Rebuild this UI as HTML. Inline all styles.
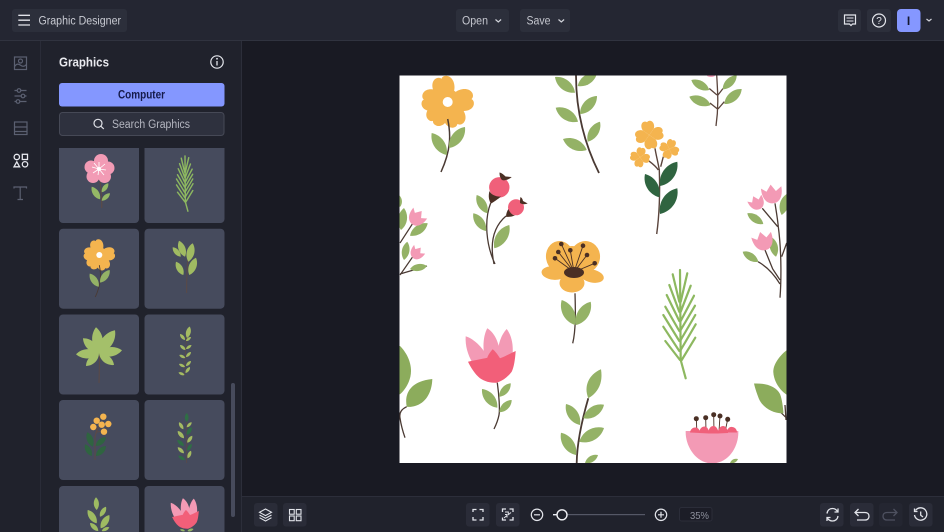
<!DOCTYPE html>
<html><head><meta charset="utf-8"><title>Graphic Designer</title>
<style>
html,body{margin:0;padding:0;background:#191a23;width:944px;height:532px;overflow:hidden}
svg{display:block;overflow:hidden}
text{font-family:"Liberation Sans",sans-serif}
</style></head><body>
<svg width="944" height="532" viewBox="0 0 944 532" xmlns="http://www.w3.org/2000/svg">
<defs>
<path id="l" d="M0 0C.28 -.27 .72 -.27 1 0C.72 .27 .28 .27 0 0Z"/>
<path id="p" d="M0 0L-9 -9C-12 -14 -12 -23 -6 -25.500C-3 -26.500 -1 -25.500 0 -24C1 -25.500 3 -26.500 6 -25.500C12 -23 12 -14 9 -9Z"/>
<path id="q" d="M0 0L-5.500 -5.500C-7.500 -9 -6 -14 -2.500 -14C-1.500 -14 -.5 -13.500 0 -13C.5 -13.500 1.500 -14 2.500 -14C6 -14 7.500 -9 5.500 -5.500Z"/>
<path id="t" d="M0 0C-6 0 -10.500 -5 -10.500 -15L-5.500 -11.500L-1 -18L3.500 -11.500L9 -15.500C10 -6 6 0 0 0Z"/>
<clipPath id="cv"><rect x="399.500" y="75.500" width="387" height="387.500"/></clipPath>
<clipPath id="list"><rect x="50" y="148" width="176" height="384"/></clipPath>

<g id="fl1">
<g fill="#f4b44f">
<circle cx="447.700" cy="102" r="13"/>
<use href="#p" transform="translate(447.700 102) rotate(-15)"/>
<use href="#p" transform="translate(447.700 102) rotate(83)"/>
<use href="#p" transform="translate(447.700 102) rotate(156)"/>
<use href="#p" transform="translate(447.700 102) rotate(218)"/>
<use href="#p" transform="translate(447.700 102) rotate(276)"/>
</g>
<circle cx="447.700" cy="102" r="5" fill="#fff"/>
<path d="M447.700 119C451 135 451 150 441 172" fill="none" stroke="#4a3a33" stroke-width="1.500"/>
<g fill="#94b266">
<use href="#l" transform="matrix(-15 -22 22 -15 446.700 155)"/>
<use href="#l" transform="matrix(16 -21 21 16 449 148)"/>
</g>
</g>

<g id="fern" fill="none" stroke-linecap="round">
<path d="M680 270L680.700 360L685.700 378.300"/>
<path d="M679.300 301.700L672.700 274.300M679.300 311.700L669.300 285M679.300 321L666.700 295M679.300 331L665.300 306.700M679.300 341L663.300 315M679.300 351L663.300 326.700M680 360L665.300 341"/>
<path d="M680.700 301.700L687.300 273.300M680.700 311.700L690.700 285.700M680.700 321L694 295.700M680.700 330L695 305.700M680.700 340L695.300 315M680.700 350L695.700 324.300M681.700 360L695.300 337.700"/>
</g>

<g id="tulh">
<g fill="#f39ab5">
<path d="M465.700 336.300C474 339 484 348 490 362L472 362C468 355 465 346 465.700 336.300Z"/>
<path d="M487.300 328.300C495 333 501 345 500 362L486 362C482 350 483 336 487.300 328.300Z"/>
<path d="M506.700 329C512 336 514 347 512 358L497 362C497 348 500 336 506.700 329Z"/>
</g>
<path d="M468 361.700C475 360 482 359 487.300 357.700C488 355 491 351 492.700 349.300C495 351 498 355 500 358.300C506 356 511 353 515.700 351C515 360 514 367 511.700 371.700C507 378 502 381 496.700 382.700C489 383 484 381 480 378.300C475 374 471 368 468 361.700Z" fill="#f25f79"/>
</g>
</defs>

<!-- base panels -->
<rect width="944" height="532" fill="#191a23"/>
<rect x="0" y="40" width="241" height="492" fill="#20222c"/>
<rect x="241" y="497" width="703" height="35" fill="#20222c"/>
<rect x="0" y="0" width="944" height="40" fill="#242632"/>
<rect x="0" y="40" width="944" height="1" fill="#30333f"/>
<rect x="40" y="41" width="1" height="491" fill="#2a2c38"/>
<rect x="241" y="41" width="1" height="491" fill="#2c2e3a"/>
<rect x="242" y="496" width="702" height="1" fill="#2c2e3a"/>

<!-- top bar -->
<rect x="12" y="9" width="115" height="23" rx="3" fill="#2c2f3b"/>
<path d="M18.300 15.300H30M18.300 20.200H30M18.300 25H30" stroke="#e2e4ea" stroke-width="1.300" fill="none"/>
<text x="38.500" y="24.500" font-size="11.500" fill="#c9cbd3" textLength="82.500" lengthAdjust="spacingAndGlyphs">Graphic Designer</text>

<rect x="456" y="9" width="53" height="23" rx="3" fill="#2c2f3b"/>
<text x="462" y="24.500" font-size="11.500" fill="#c4c6ce" textLength="26" lengthAdjust="spacingAndGlyphs">Open</text>
<path d="M495.500 19.500L498.300 22L501.100 19.500" fill="none" stroke="#d2d4db" stroke-width="1.200"/>
<rect x="520" y="9" width="50" height="23" rx="3" fill="#2c2f3b"/>
<text x="526.500" y="24.500" font-size="11.500" fill="#c4c6ce" textLength="24" lengthAdjust="spacingAndGlyphs">Save</text>
<path d="M558.500 19.500L561.300 22L564.100 19.500" fill="none" stroke="#d2d4db" stroke-width="1.200"/>

<rect x="838" y="9" width="23" height="23" rx="3" fill="#2c2f3b"/>
<path d="M844.500 15H855.500V24H852.500L851 25.500L849.500 24H844.500Z" fill="none" stroke="#e4e6ec" stroke-width="1.200"/>
<path d="M846.500 18H853.500M846.500 21H853.500" stroke="#e4e6ec" stroke-width="1"/>
<rect x="867" y="9" width="24" height="23" rx="3" fill="#2c2f3b"/>
<circle cx="879" cy="20.500" r="6.500" fill="none" stroke="#e4e6ec" stroke-width="1.200"/>
<text x="879" y="24" font-size="10" text-anchor="middle" fill="#e4e6ec">?</text>
<rect x="897" y="9" width="23.500" height="23" rx="4" fill="#8597ff"/>
<text x="908.500" y="25" font-size="12" text-anchor="middle" fill="#151830" font-weight="bold">I</text>
<path d="M926.500 19L929 21L931.500 19" fill="none" stroke="#d2d4db" stroke-width="1.200"/>

<!-- rail icons -->
<g fill="none" stroke="#5b6071" stroke-width="1.200">
<rect x="14.500" y="57" width="12" height="12.500"/>
<circle cx="20.500" cy="61" r="2"/>
<path d="M14.500 66.500C17 63 19 64 21 65.500C23 67 25 66 26.500 64.500"/>
<path d="M14.500 90.500H26.500M14.500 96H26.500M14.500 101.500H26.500"/>
<circle cx="19" cy="90.500" r="1.800" fill="#20222c"/><circle cx="23" cy="96" r="1.800" fill="#20222c"/><circle cx="18" cy="101.500" r="1.800" fill="#20222c"/>
<rect x="14.500" y="122" width="12.500" height="12.500"/>
<path d="M14.500 127H27M14.500 131.500H27"/>
<path d="M14 188.500V187H26.500V188.500M20.200 187V199.500M17.500 199.500H23"/>
</g>
<g fill="none" stroke="#e6e8ee" stroke-width="1.300">
<circle cx="16.800" cy="157" r="2.700"/>
<rect x="22.300" y="154.300" width="5.200" height="5.200"/>
<path d="M16.800 161.800L19.600 166.800H14Z"/>
<circle cx="25" cy="164.300" r="2.700"/>
</g>

<!-- panel header -->
<text x="59" y="66.500" font-size="13" font-weight="bold" fill="#e9eaef" textLength="50" lengthAdjust="spacingAndGlyphs">Graphics</text>
<circle cx="217" cy="62" r="6.200" fill="none" stroke="#e4e6ec" stroke-width="1.200"/>
<path d="M217 61V65.500" stroke="#e4e6ec" stroke-width="1.300"/><circle cx="217" cy="58.800" r=".9" fill="#e4e6ec"/>
<rect x="59" y="83" width="165.500" height="23.500" rx="3" fill="#8497ff"/>
<text x="141.500" y="98.500" font-size="11.500" font-weight="bold" text-anchor="middle" fill="#151a4a" textLength="47" lengthAdjust="spacingAndGlyphs">Computer</text>
<rect x="59.500" y="112.500" width="164.500" height="23" rx="3" fill="#2e313e" stroke="#464956"/>
<circle cx="98" cy="123.300" r="4" fill="none" stroke="#e0e2e8" stroke-width="1.200"/>
<path d="M101 126.300L103.800 129" stroke="#e0e2e8" stroke-width="1.200"/>
<text x="112" y="128" font-size="11.500" fill="#b5b7c1" textLength="78" lengthAdjust="spacingAndGlyphs">Search Graphics</text>

<!-- scrollbar -->
<rect x="231" y="383" width="4" height="134" rx="2" fill="#474b5c"/>

<!-- cards -->
<g clip-path="url(#list)">
<g fill="#464b5d">
<rect x="59" y="140" width="80" height="83" rx="4"/><rect x="144.500" y="140" width="80" height="83" rx="4"/>
<rect x="59" y="228.700" width="80" height="80" rx="4"/><rect x="144.500" y="228.700" width="80" height="80" rx="4"/>
<rect x="59" y="314.500" width="80" height="80" rx="4"/><rect x="144.500" y="314.500" width="80" height="80" rx="4"/>
<rect x="59" y="400" width="80" height="80" rx="4"/><rect x="144.500" y="400" width="80" height="80" rx="4"/>
<path d="M59 532V490a4 4 0 0 1 4 -4H135a4 4 0 0 1 4 4V532Z"/>
<path d="M144.500 532V490a4 4 0 0 1 4 -4H220.500a4 4 0 0 1 4 4V532Z"/>
</g>

<!-- card 1 pink flower -->
<path d="M100 181.700C101 190 102 200 101.700 208" fill="none" stroke="#5a4a48" stroke-width="1.300"/>
<g fill="#94b866">
<use href="#l" transform="matrix(-8.300 -12.600 12.600 -8.300 100 199.300)"/>
<use href="#l" transform="matrix(6.600 -9 9 6.600 101.700 192.300)"/>
<use href="#l" transform="matrix(8.300 -7.400 7.400 8.300 101.700 200.700)"/>
</g>
<g fill="#f29bb5">
<circle cx="101" cy="161" r="7"/><circle cx="108" cy="168" r="6.500"/><circle cx="104.500" cy="176.500" r="6.500"/><circle cx="93" cy="176.500" r="6.500"/><circle cx="91" cy="167" r="6.500"/><circle cx="99" cy="169" r="8"/>
</g>
<path d="M99 169L99 162M99 169L105 164M99 169L106 170M99 169L104 175M99 169L98 175M99 169L93 173M99 169L92 167M99 169L94 163" stroke="#fff" stroke-width=".8"/>
<circle cx="99" cy="169" r="2" fill="#fff"/>

<!-- card 2 fern -->
<use href="#fern" stroke="#8db860" stroke-width="2.800" transform="matrix(.51 0 0 .51 -161.800 18.300)"/>

<!-- card 3 orange -->
<use href="#fl1" transform="matrix(.6 0 0 .6 -169.300 193.800)"/>

<!-- card 4 -->
<path d="M186.700 293C186.500 280 187 268 188 258" fill="none" stroke="#5a4a48" stroke-width="1.100"/>
<g fill="#a0bb62">
<use href="#l" transform="matrix(-8 -9.400 9.400 -8 180.700 256.700)"/>
<use href="#l" transform="matrix(-6 -16 16 -6 185 256.700)"/>
<use href="#l" transform="matrix(4.400 -18.400 18.400 4.400 188.300 261.700)"/>
<use href="#l" transform="matrix(-7.300 -13.300 13.300 -7.300 183.300 275)"/>
<use href="#l" transform="matrix(6.700 -17.300 17.300 6.700 189.300 275)"/>
</g>

<!-- card 5 palm -->
<path d="M99.700 353L99 383" fill="none" stroke="#5a4a48" stroke-width="1.100"/>
<g fill="#a4c06a">
<use href="#l" transform="matrix(-23 1 -1 -23 99 353.300)"/>
<use href="#l" transform="matrix(23 -3 3 23 99 353.300)"/>
<use href="#l" transform="matrix(-13 12.700 -12.700 -13 99 353.300)"/>
<use href="#l" transform="matrix(15 11.700 -11.700 15 99 353.300)"/>
<use href="#l" transform="matrix(-16 -15 15 -16 99 353.300)"/>
<use href="#l" transform="matrix(-3 -26 26 -3 99 353.300)"/>
<use href="#l" transform="matrix(16 -23 23 16 99 353.300)"/>
</g>

<!-- card 6 vine -->
<path d="M187 330L184 376" fill="none" stroke="#5a4a48" stroke-width=".8"/>
<g fill="#a4bb62">
<use href="#l" transform="matrix(2.700 -11.500 11.500 2.700 187 338)"/>
<use href="#l" transform="matrix(-5 -6 6 -5 185 340)"/>
<use href="#l" transform="matrix(5 -4 4 5 186 341)"/>
<use href="#l" transform="matrix(-5.500 -5 5 -5.500 185.500 350)"/>
<use href="#l" transform="matrix(5.500 -4 4 5.500 186 349)"/>
<use href="#l" transform="matrix(-6 -3 3 -6 185.300 358)"/>
<use href="#l" transform="matrix(5 -5 5 5 186 357)"/>
<use href="#l" transform="matrix(-6 -3 3 -6 185 367)"/>
<use href="#l" transform="matrix(5 -5 5 5 186 366)"/>
<use href="#l" transform="matrix(-6 -2.500 2.500 -6 184.500 375)"/>
<use href="#l" transform="matrix(4.500 -6 6 4.500 185.500 373)"/>
</g>

<!-- card 7 -->
<path d="M95 460L95 436L100 424M95 438L97 427M97 432L104 431" fill="none" stroke="#5a4a48" stroke-width="1"/>
<g fill="#2f6440">
<use href="#l" transform="matrix(-5.400 -14.400 14.400 -5.400 92.700 446.700)"/>
<use href="#l" transform="matrix(10.300 -8.700 8.700 10.300 95.700 446)"/>
<use href="#l" transform="matrix(-6.700 -11.700 11.700 -6.700 91.700 456)"/>
<use href="#l" transform="matrix(10 -10 10 10 96 456)"/>
</g>
<g fill="#f4b44f">
<circle cx="103.300" cy="416.700" r="3.200"/><circle cx="96.700" cy="420.700" r="3.200"/><circle cx="101.700" cy="424.700" r="3.200"/><circle cx="108.300" cy="424" r="3.200"/><circle cx="93.300" cy="427" r="3.200"/><circle cx="104" cy="431.700" r="3.200"/>
</g>

<!-- card 8 -->
<path d="M186.700 418L186.700 463" fill="none" stroke="#5a4a48" stroke-width=".8"/>
<g fill="#2f6e45">
<use href="#l" transform="matrix(0 -9 9 0 186.700 422)"/>
<use href="#l" transform="matrix(-6.700 -6 6 -6.700 184 446)"/>
<use href="#l" transform="matrix(-6.700 -4.300 4.300 -6.700 185 460)"/>
<use href="#l" transform="matrix(5 -7.700 7.700 5 186.700 435)"/>
<use href="#l" transform="matrix(4.400 -6.700 6.700 4.400 187.300 450.700)"/>
</g>
<g fill="#a4bb62">
<use href="#l" transform="matrix(-4.300 -7 7 -4.300 183.300 429.300)"/>
<use href="#l" transform="matrix(-6.300 -7.300 7.300 -6.300 184 438.300)"/>
<use href="#l" transform="matrix(-6.300 -6 6 -6.300 184 453.300)"/>
<use href="#l" transform="matrix(5 -5 5 5 186.700 427.300)"/>
<use href="#l" transform="matrix(5 -7 7 5 187.300 442.700)"/>
<use href="#l" transform="matrix(3.300 -7.600 7.600 3.300 187.700 458.300)"/>
</g>

<!-- card 9 -->
<g fill="#9ebb62">
<use href="#l" transform="matrix(-.7 -12.700 12.700 -.7 96.700 510)"/>
<use href="#l" transform="matrix(6 -10 10 6 100 516.700)"/>
<use href="#l" transform="matrix(-9 -13.300 13.300 -9 96.700 523.300)"/>
<use href="#l" transform="matrix(8.600 -13.300 13.300 8.600 100.700 528.300)"/>
<use href="#l" transform="matrix(-8.300 -8 8 -8.300 98.300 531)"/>
<use href="#l" transform="matrix(7.600 -3.700 3.700 7.600 101.700 531)"/>
</g>

<!-- card 10 tulip -->
<use href="#tulh" transform="matrix(.56 0 0 .56 -90 314.400)"/>
<g fill="#94b266">
<use href="#l" transform="matrix(-5 -1.500 1.500 -5 185 531)"/>
<use href="#l" transform="matrix(6 -2 2 6 187.500 531)"/>
</g>
</g>

<!-- canvas -->
<rect x="399.500" y="75.500" width="387" height="387.500" fill="#fff"/>
<g clip-path="url(#cv)">
<use href="#fl1"/>

<!-- plant 2 -->
<path d="M576 75C576 100 580 135 599 173" fill="none" stroke="#4a3a33" stroke-width="1.800"/>
<g fill="#94b266">
<use href="#l" transform="matrix(-20 -15.700 15.700 -20 575 92.700)"/>
<use href="#l" transform="matrix(19.300 -13 13 19.300 577.700 86)"/>
<use href="#l" transform="matrix(17 -18 18 17 580 114)"/>
<use href="#l" transform="matrix(-22.300 -14 14 -22.300 578 121.700)"/>
<use href="#l" transform="matrix(12.300 -20 20 12.300 587.700 141.700)"/>
<use href="#l" transform="matrix(-23.700 -11 11 -23.700 586.700 150)"/>
</g>

<!-- rosehip -->
<path d="M495 264C486 245 484 220 490.700 203M494 264C490 245 492 228 506 216" fill="none" stroke="#4a3a33" stroke-width="1.300"/>
<g fill="#94b266">
<use href="#l" transform="matrix(-10.600 -18.300 18.300 -10.600 487.300 213.300)"/>
<use href="#l" transform="matrix(-12.700 -17.700 17.700 -12.700 486 231)"/>
<use href="#l" transform="matrix(15 -23.300 23.300 15 494.300 248.300)"/>
</g>
<circle cx="499.300" cy="187.300" r="10.200" fill="#f0607a"/>
<path d="M489.500 191C491 195 497 197 501 196.500C498 199 494 202 491 203.500C489 201 488 196 489.500 191Z" fill="#4a2f24"/>
<path d="M499.500 172.500C502 173 504 175 505.500 176.500L511.700 177C509 179.500 505 181 502 180C500 178 499.500 175 499.500 172.500Z" fill="#4a2f24"/>
<circle cx="516" cy="207.300" r="8" fill="#f0607a"/>
<path d="M508.500 209C509.500 212 512 215 515 215.500C511 217 508 217 506 216.700C506 214 507 211 508.500 209Z" fill="#4a2f24"/>
<path d="M520.500 197C522 198 522.500 199 523 201L527.700 203.500C525 204.500 522 204.500 520 203C520 201 520 199 520.500 197Z" fill="#4a2f24"/>

<!-- left pink plant -->
<path d="M400 243L413 223M400 275C405 268 409 262 413.300 256M400 274L427 266" fill="none" stroke="#4a3a33" stroke-width="1.200"/>
<g fill="#94b266">
<use href="#l" transform="matrix(3 -22 22 3 401 230)"/>
<use href="#l" transform="matrix(17.700 -12.400 12.400 17.700 410 235.700)"/>
<use href="#l" transform="matrix(3.300 -18.300 18.300 3.300 404 260)"/>
<use href="#l" transform="matrix(17 -3 3 17 410 269)"/>
<use href="#l" transform="matrix(1 12 -12 1 399 195)"/>
</g>
<g fill="#f39ab5">
<use href="#t" transform="translate(412 224) rotate(40) scale(.9)"/>
<use href="#t" transform="translate(413 258) rotate(40) scale(.72)"/>
</g>

<!-- center yellow flower -->
<g fill="#f4b44f">
<ellipse cx="560" cy="257" rx="14" ry="16" transform="rotate(-10 560 257)"/>
<ellipse cx="585" cy="257" rx="15" ry="16" transform="rotate(12 585 257)"/>
<ellipse cx="554" cy="273" rx="12.500" ry="6.800" transform="rotate(5 554 273)"/>
<ellipse cx="592" cy="276" rx="12" ry="6.500" transform="rotate(12 592 276)"/>
<ellipse cx="572" cy="283" rx="12.500" ry="9.500"/>
<circle cx="572" cy="260" r="14"/>
</g>
<g stroke="#4a2f24" stroke-width=".9" fill="none">
<path d="M574 272L561.300 244M574 272L583 245.700M574 272L558.300 252M574 272L570.300 250.300M574 272L587 255M574 272L555 258.300M574 272L594.700 263.300"/>
</g>
<g fill="#4a2f24">
<circle cx="561.300" cy="244" r="2.300"/><circle cx="583" cy="245.700" r="2.300"/><circle cx="558.300" cy="252" r="2.300"/><circle cx="570.300" cy="250.300" r="2.300"/><circle cx="587" cy="255" r="2.300"/><circle cx="555" cy="258.300" r="2.300"/><circle cx="594.700" cy="263.300" r="2.300"/>
<ellipse cx="574" cy="272.500" rx="10" ry="5.500"/>
</g>
<path d="M575 293.300C575.500 310 576 330 572.700 343.300" fill="none" stroke="#4a3a33" stroke-width="1.300"/>
<g fill="#94b266">
<use href="#l" transform="matrix(-13.300 -25 25 -13.300 575 325)"/>
<use href="#l" transform="matrix(14.700 -23.300 23.300 14.700 576 325)"/>
</g>

<!-- yellow small flowers plant -->
<path d="M656.700 234C660 210 660 190 659.300 170C658 162 656 155 655 148.300M658.300 170C655 165 650 162 646.700 159.300M660.700 166.700L663.300 156.700" fill="none" stroke="#5a443c" stroke-width="1.400"/>
<g fill="#2f6440">
<use href="#l" transform="matrix(17.300 -24.300 24.300 17.300 660 186)"/>
<use href="#l" transform="matrix(-14.300 -23.300 23.300 -14.300 659.300 197.300)"/>
<use href="#l" transform="matrix(17.300 -25.700 25.700 17.300 660 214)"/>
</g>
<g fill="#f4b44f">
<use href="#q" transform="translate(649.300 135) rotate(-10)"/>
<use href="#q" transform="translate(649.300 135) rotate(80)"/>
<use href="#q" transform="translate(649.300 135) rotate(170)"/>
<use href="#q" transform="translate(649.300 135) rotate(260)"/>
<use href="#q" transform="translate(640 157.300) rotate(10) scale(.7)"/>
<use href="#q" transform="translate(640 157.300) rotate(100) scale(.7)"/>
<use href="#q" transform="translate(640 157.300) rotate(190) scale(.7)"/>
<use href="#q" transform="translate(640 157.300) rotate(280) scale(.7)"/>
<use href="#q" transform="translate(669.300 149) rotate(20) scale(.7)"/>
<use href="#q" transform="translate(669.300 149) rotate(110) scale(.7)"/>
<use href="#q" transform="translate(669.300 149) rotate(200) scale(.7)"/>
<use href="#q" transform="translate(669.300 149) rotate(290) scale(.7)"/>
</g>

<!-- top right plant -->
<ellipse cx="711" cy="75.500" rx="4" ry="1.500" fill="#f39ab5"/>
<path d="M716.700 75C717.500 90 719 105 716 126M709.300 88.500L717 95M723 88.500L718 95M710 103L717.500 109M724.300 101.700L718 109" fill="none" stroke="#5a443c" stroke-width="1.300"/>
<g fill="#94b266">
<use href="#l" transform="matrix(-18 -10 10 -18 709.300 90)"/>
<use href="#l" transform="matrix(14 -14 14 14 722.700 89.300)"/>
<use href="#l" transform="matrix(-21.400 -8.300 8.300 -21.400 710.700 105)"/>
<use href="#l" transform="matrix(17.400 -15 15 17.400 724.300 104)"/>
</g>

<!-- right pink plant -->
<path d="M780 297.700C781 285 782 255 778.300 226.700C777.500 218 776 210 775 203.300M777.700 226.700L762.300 208.300M765 250L772.700 269L780 280M758 261.700C764 265 772 271 780 284M781.700 256.700L786.700 243" fill="none" stroke="#4a3a33" stroke-width="1.300"/>
<g fill="#94b266">
<use href="#l" transform="matrix(-16 -10.700 10.700 -16 763.300 224)"/>
<use href="#l" transform="matrix(5 -21 21 5 781.700 215)"/>
<use href="#l" transform="matrix(-15.600 -10 10 -15.600 758.300 261.700)"/>
<use href="#l" transform="matrix(-4.300 -19.400 19.400 -4.300 776 256.700)"/>
</g>
<g fill="#f39ab5">
<use href="#t" transform="translate(773.300 203.300) rotate(-5) scale(1.050)"/>
<use href="#t" transform="translate(760 209) rotate(-25) scale(.8)"/>
<use href="#t" transform="translate(766 250) rotate(-15) scale(1.050)"/>
</g>

<!-- fern -->
<use href="#fern" stroke="#8db860" stroke-width="2.200"/>

<!-- bottom left tulip -->
<use href="#tulh"/>
<path d="M497.300 382.700C499 395 500 410 499 415C498 420 496 425 494 429" fill="none" stroke="#4a3a33" stroke-width="1.300"/>
<g fill="#94b266">
<use href="#l" transform="matrix(-15.300 -18.700 18.700 -15.300 497.300 407.700)"/>
<use href="#l" transform="matrix(11.400 -13.400 13.400 11.400 499.300 396.700)"/>
<use href="#l" transform="matrix(12.400 -12.300 12.300 12.400 499.300 412.300)"/>
</g>

<!-- left bottom plant -->
<path d="M406.700 406.700C402 409 399 412 400 418C401 425 403 432 405 437.700" fill="none" stroke="#4a3a33" stroke-width="1.300"/>
<g fill="#8cac5c">
<path d="M400 346C406 352 411 361 411 371C411 381 405 390 400 394.300L396 394V346Z"/>
<path d="M406.700 406.700C404 392 412 381 432.300 379C432 392 426 403 415 406C412 407 409 407 406.700 406.700Z"/>
</g>

<!-- bottom center plant -->
<path d="M588.300 398.300C582 420 577 442 576.700 463" fill="none" stroke="#4a3a33" stroke-width="1.800"/>
<g fill="#94b266">
<path d="M588.300 398.300C583 385 590 374 601 369.300C603 382 599 392 588.300 398.300Z"/>
<use href="#l" transform="matrix(-14 -21 21 -14 580 425)"/>
<use href="#l" transform="matrix(20.700 -13.600 13.600 20.700 583.300 418.300)"/>
<use href="#l" transform="matrix(24.700 -13.700 13.700 24.700 579.300 441.700)"/>
<use href="#l" transform="matrix(-15 -22.300 22.300 -15 576 455)"/>
<use href="#l" transform="matrix(13 -8 8 13 585 463)"/>
</g>

<!-- bottom pink flower -->
<path d="M696.800 430L696.300 418.700M706 432L705.700 417.700M714 433L713.700 414.700M719 431L720 416M725 432L727.700 419.300" stroke="#4a2f24" stroke-width=".9" fill="none"/>
<g fill="#4a2f24">
<circle cx="696.300" cy="418.700" r="2.500"/><circle cx="705.700" cy="417.700" r="2.500"/><circle cx="713.700" cy="414.700" r="2.500"/><circle cx="720" cy="416" r="2.500"/><circle cx="727.700" cy="419.300" r="2.500"/>
</g>
<path d="M685.700 431C685 445 695 463 712 463.500C730 463 739 445 738.300 431Z" fill="#f39ab5"/>
<g fill="#f0607a">
<path d="M690 432.500C690.500 429 693 427.500 695 427.500C698 427 700 430 700 433Z"/>
<path d="M699 433C699.500 428.500 702 426.500 704.500 426.500C707.500 426.500 709 430 709 433.500Z"/>
<path d="M708 433.500C708.500 428 711 426 713.500 426C716.500 426 718.500 430 718.500 433.500Z"/>
<path d="M717.500 433.500C718 428 721 426 723 426C726 426 728 430 728 433Z"/>
<path d="M727 432.500C727 429 729.500 426.500 732 427C735 427 737 429.500 737 432.500Z"/>
</g>
<use href="#l" transform="matrix(8 -4 4 8 730 463)" fill="#94b266"/>

<!-- right clipped plant -->
<path d="M780.700 412.300L787 418.500M785 405L786 420" fill="none" stroke="#4a3a33" stroke-width="1.300"/>
<g fill="#8cac5c">
<path d="M787 350C779 356 773 365 773.300 372C774 383 781 391 787 395Z"/>
<path d="M754 383.500C765 383 776 386 780 394C782 399 783 407 783.500 413.300C774 414 763 408 759 399C757 394 755 388 754 383.500Z"/>
</g>
</g>

<!-- bottom left icons -->
<rect x="254" y="503" width="23.500" height="23.500" rx="3" fill="#2a2c38"/>
<rect x="283" y="503" width="23.500" height="23.500" rx="3" fill="#2a2c38"/>
<g fill="none" stroke="#e2e4ea" stroke-width="1.100">
<path d="M265.500 509L271.500 512.300L265.500 515.600L259.500 512.300Z"/>
<path d="M259.500 515L265.500 518.300L271.500 515M259.500 517.700L265.500 521L271.500 517.700"/>
<rect x="289.500" y="509.500" width="4.700" height="4.700"/><rect x="296.300" y="509.500" width="4.700" height="4.700"/>
<rect x="289.500" y="516" width="4.700" height="4.700"/><rect x="296.300" y="516" width="4.700" height="4.700"/>
</g>

<!-- fullscreen -->
<rect x="466" y="503" width="23.500" height="23.500" rx="3" fill="#2a2c38"/>
<rect x="496" y="503" width="23.500" height="23.500" rx="3" fill="#2a2c38"/>
<g fill="none" stroke="#e2e4ea" stroke-width="1.300">
<path d="M473 512V509.500H476.500M479.500 509.500H483V512M483 517V520H479.500M476.500 520H473V517"/>
<path d="M502.500 512V509H506M513 517V520H509.500M506 520H502.500V517.500M509.500 509H513V512"/>
<path d="M505 512H508.300V514M511 512.500L508 515M507 517.500V514.500H505M504 518L507 515.500" stroke-width="1"/>
</g>

<!-- zoom -->
<g fill="none" stroke="#e2e4ea" stroke-width="1.200">
<circle cx="537" cy="514.800" r="5.700"/><path d="M534 514.800H540"/>
<circle cx="661" cy="514.800" r="5.700"/><path d="M658 514.800H664M661 511.800V517.800"/>
</g>
<rect x="553" y="514" width="92" height="1.200" fill="#555866"/>
<rect x="553" y="514" width="5" height="1.400" fill="#e8eaf0"/>
<circle cx="562" cy="514.800" r="5" fill="#20222c" stroke="#f0f1f5" stroke-width="1.400"/>
<rect x="679.500" y="507.500" width="32.500" height="13.500" rx="2" fill="#1c1d27" stroke="#2b2d39"/>
<text x="690" y="519" font-size="10.500" fill="#8d909c" textLength="19" lengthAdjust="spacingAndGlyphs">35%</text>

<!-- right bottom -->
<rect x="820" y="503" width="23.500" height="23.500" rx="3" fill="#2a2c38"/>
<rect x="850" y="503" width="23.500" height="23.500" rx="3" fill="#2a2c38"/>
<rect x="879" y="503" width="23.500" height="23.500" rx="3" fill="#242631"/>
<rect x="909" y="503" width="23.500" height="23.500" rx="3" fill="#2a2c38"/>
<g fill="none" stroke="#e2e4ea" stroke-width="1.300">
<path d="M827 513.500C827.500 510 830 508.500 832.500 508.500C835 508.500 836.500 510 837.500 511.500M838 516C837.500 519.500 835 521 832.500 521C830 521 828.300 519.500 827.300 518"/>
<path d="M838 508.500V512H834.500M827 521V517.500H830.500"/>
<path d="M855 512.500H865C868 512.500 869 514.500 869 516.300C869 518 868 520 865 520H857"/>
<path d="M858.500 509L855 512.500L858.500 516"/>
<path d="M897 512.500H887C884 512.500 883 514.500 883 516.300C883 518 884 520 887 520H895" stroke="#4e5160"/>
<path d="M893.500 509L897 512.500L893.500 516" stroke="#4e5160"/>
<path d="M915.500 510.500A6.200 6.200 0 1 1 914.500 515"/>
<path d="M914.500 508.500V511.500H917.500"/>
<path d="M920.700 511.500V515.200L923 517"/>
</g>
</svg>
</body></html>
